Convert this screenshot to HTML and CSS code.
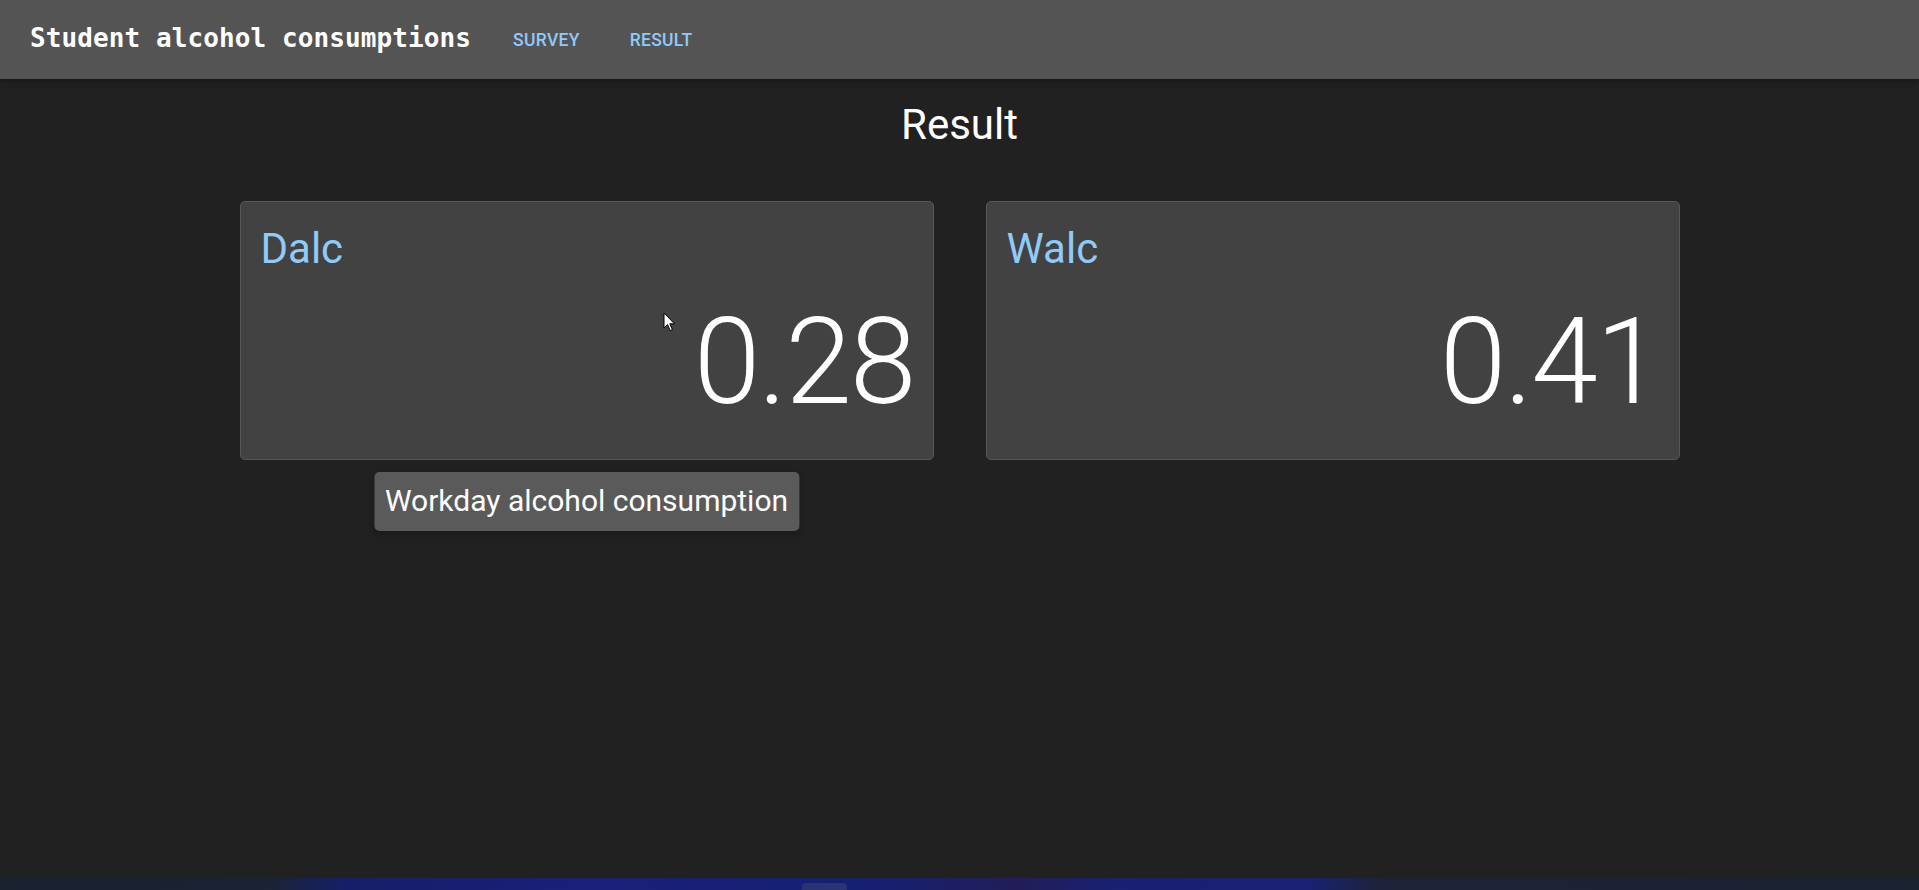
FILE: index.html
```html
<!DOCTYPE html>
<html lang="en">
<head>
<meta charset="utf-8">
<title>Student alcohol consumptions</title>
<link rel="stylesheet" href="styles.css">
</head>
<body>
<div class="app">
  <header class="app-bar">
    <div class="app-title">Student alcohol consumptions</div>
    <nav class="nav">
      <a class="nav-btn" href="#">SURVEY</a>
      <a class="nav-btn" href="#">RESULT</a>
    </nav>
  </header>
  <main class="main">
    <h1 class="page-title">Result</h1>
    <div class="cards">
      <div class="card">
        <div class="card-title">Dalc</div>
        <div class="card-value">0.28</div>
        <svg class="cursor" width="13" height="20" viewBox="0 0 13 20"><path d="M1 1 L1 16 L4.5 12.6 L7.2 18.6 L9.4 17.6 L6.8 11.8 L11.5 11.8 Z" fill="#fff" stroke="#000" stroke-width="1" stroke-linejoin="round"/></svg>
        <div class="tooltip">Workday alcohol consumption</div>
      </div>
      <div class="card">
        <div class="card-title">Walc</div>
        <div class="card-value">0.41</div>
      </div>
    </div>
  </main>
  <div class="desktop-strip"><div class="taskbar-item"></div></div>
</div>
</body>
</html>
```
FILE: styles.css
```css
* { box-sizing: border-box; }
html, body { margin: 0; padding: 0; }
body {
  background: #212121;
  color: #fff;
  font-family: Roboto, "Noto Sans", "Liberation Sans", sans-serif;
}
.app {
  height: 100vh;
  display: flex;
  flex-direction: column;
  overflow: hidden;
}
.app-bar {
  height: 79px;
  flex: 0 0 79px;
  background: #545454;
  display: flex;
  align-items: center;
  padding-left: 30px;
  box-shadow: 0 2px 4px -1px rgba(0,0,0,.2), 0 4px 5px 0 rgba(0,0,0,.14);
  position: relative;
  z-index: 1;
}
.app-title {
  font-family: "DejaVu Sans Mono", "Liberation Mono", monospace;
  font-weight: bold;
  font-size: 26px;
  letter-spacing: 0.1px;
  color: #fff;
  margin-bottom: 4px;
}
.nav {
  display: flex;
  margin-left: 17px;
}
.nav-btn {
  font-family: Roboto, sans-serif;
  font-weight: 500;
  font-size: 17.5px;
  letter-spacing: 0.3px;
  color: #90caf9;
  text-decoration: none;
  padding: 0 25px;
  line-height: 44px;
}
.main {
  flex: 1;
  display: flex;
  flex-direction: column;
  align-items: center;
}
.page-title {
  margin: 21px 0 0;
  font-size: 42px;
  line-height: 50px;
  font-weight: 400;
  color: #fff;
}
.cards {
  margin-top: 51px;
  display: flex;
  gap: 52px;
}
.card {
  position: relative;
  width: 694px;
  height: 259px;
  background: #424242;
  border: 1px solid #575757;
  border-radius: 5px;
  padding: 22px 18px 0 20px;
  display: flex;
  flex-direction: column;
}
.card-title {
  font-size: 42px;
  line-height: 50px;
  color: #90caf9;
  font-weight: 400;
}
.card-value {
  margin-top: 28px;
  font-size: 120px;
  line-height: 120px;
  font-weight: 300;
  letter-spacing: -1.9px;
  text-align: right;
  color: #fff;
}
.cursor {
  position: absolute;
  left: 422px;
  top: 110px;
}
.tooltip {
  position: absolute;
  top: calc(100% + 13px);
  left: 50%;
  transform: translateX(-50%);
  background: #5a5a5a;
  color: #fff;
  border-radius: 5px;
  font-size: 30px;
  line-height: 42px;
  padding: 8px 11px 9px;
  white-space: nowrap;
  box-shadow: 0 3px 6px rgba(0,0,0,.25);
}
.desktop-strip {
  flex: 0 0 12px;
  height: 12px;
  background: linear-gradient(to right, #1a2230 0%, #1b2334 14%, #151f68 18%, #19207a 30%, #152072 45%, #221d58 53%, #1a2072 58%, #182275 68%, #1e2238 72%, #1b2230 100%);
  display: flex;
  align-items: flex-end;
}
.taskbar-item {
  margin-left: 802px;
  width: 45px;
  height: 7px;
  border-radius: 4px 4px 0 0;
  background: #2b3374;
}
```
